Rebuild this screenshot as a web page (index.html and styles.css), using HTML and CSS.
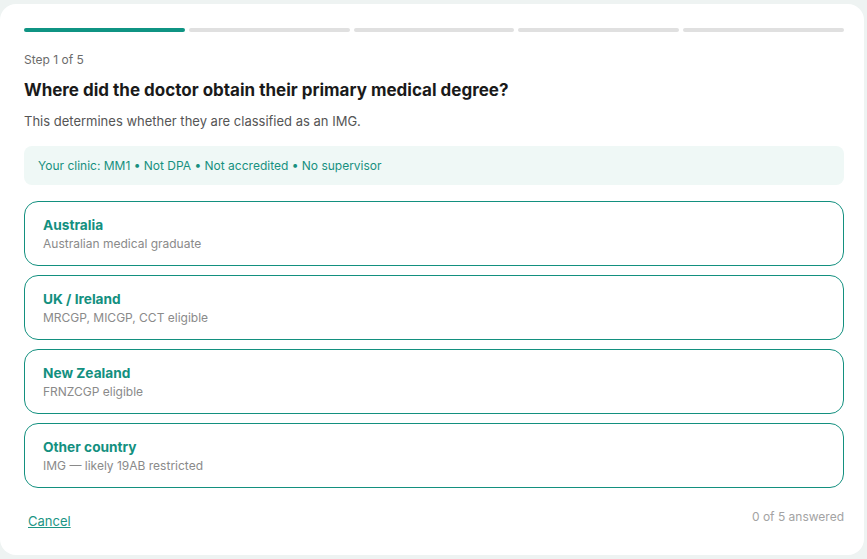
FILE: index.html
```html
<!DOCTYPE html>
<html>
<head>
<meta charset="utf-8">
<link rel="stylesheet" href="styles.css">
</head>
<body>
<div class="card">
  <div class="progress">
    <span class="seg active"></span>
    <span class="seg"></span>
    <span class="seg"></span>
    <span class="seg"></span>
    <span class="seg"></span>
  </div>
  <div class="step">Step 1 of 5</div>
  <h1 class="title">Where did the doctor obtain their primary medical degree?</h1>
  <p class="sub">This determines whether they are classified as an IMG.</p>
  <div class="info">Your clinic: MM1 • Not DPA • Not accredited • No supervisor</div>
  <div class="options">
    <button class="option"><span class="opt-title">Australia</span><span class="opt-sub">Australian medical graduate</span></button>
    <button class="option"><span class="opt-title">UK / Ireland</span><span class="opt-sub">MRCGP, MICGP, CCT eligible</span></button>
    <button class="option"><span class="opt-title">New Zealand</span><span class="opt-sub">FRNZCGP eligible</span></button>
    <button class="option"><span class="opt-title">Other country</span><span class="opt-sub">IMG — likely 19AB restricted</span></button>
  </div>
  <div class="footer">
    <a class="cancel" href="#">Cancel</a>
    <span class="count">0 of 5 answered</span>
  </div>
</div>
</body>
</html>
```
FILE: styles.css
```css
* { box-sizing: border-box; }
html, body { margin: 0; padding: 0; }
body {
  background: #eef3f2;
  font-family: Inter, "Noto Sans", "Liberation Sans", sans-serif;
  width: 867px;
  height: 559px;
  padding: 4px 3px 4px 0;
}
.card {
  background: #ffffff;
  border-radius: 16px;
  width: 864px;
  height: 551px;
  padding: 24px 20px 0 24px;
  display: flex;
  flex-direction: column;
}
.progress {
  display: flex;
  gap: 4px;
  height: 4px;
}
.seg {
  flex: 1;
  background: #e0e0e0;
  border-radius: 2px;
}
.seg.active { background: #0f9483; }
.step {
  margin-top: 20px;
  font-size: 12px;
  line-height: 16px;
  color: #6b6b6b;
}
.title {
  margin: 10px 0 0;
  font-size: 17px;
  line-height: 24px;
  font-weight: 700;
  color: #1a1a1a;
}
.sub {
  margin: 10px 0 0;
  font-size: 13px;
  line-height: 18px;
  color: #555555;
}
.info {
  margin-top: 16px;
  background: #eff8f6;
  border-radius: 8px;
  padding: 12px 14px 11px;
  font-size: 12px;
  line-height: 16px;
  color: #17907f;
}
.options {
  margin-top: 16px;
  display: flex;
  flex-direction: column;
  gap: 9px;
}
.option {
  display: flex;
  flex-direction: column;
  align-items: flex-start;
  text-align: left;
  background: #ffffff;
  border: 1px solid #13907f;
  border-radius: 14px;
  padding: 14px 18px 12px;
  height: 65px;
  font-family: inherit;
  cursor: pointer;
}
.opt-title {
  font-size: 13.7px;
  line-height: 19px;
  font-weight: 700;
  color: #13907f;
}
.opt-sub {
  font-size: 12px;
  line-height: 18px;
  color: #8a8a8a;
}
.footer {
  margin-top: 20px;
  display: flex;
  justify-content: space-between;
  align-items: flex-start;
}
.cancel {
  padding: 4px 0 0 4px;
  font-size: 13px;
  line-height: 18px;
  color: #1c9585;
  text-decoration: underline;
}
.count {
  font-size: 12px;
  line-height: 18px;
  color: #a3a3a3;
}
```
